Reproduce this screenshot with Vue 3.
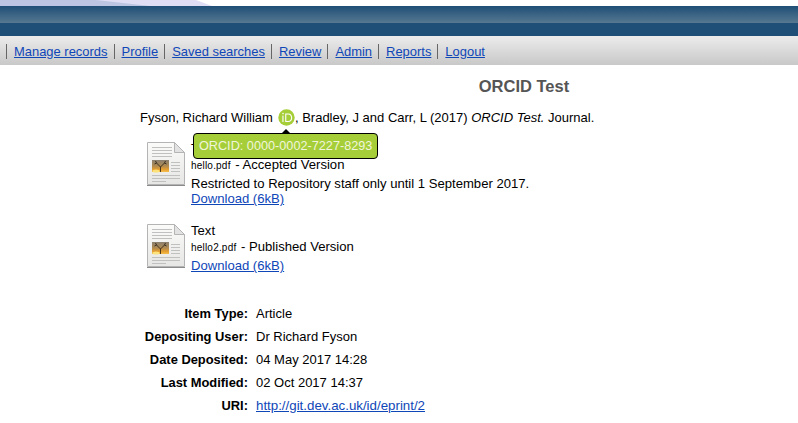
<template>
  <div class="page">
    <header class="top">
      <svg class="swoosh" width="798" height="6" viewBox="0 0 798 6">
        <rect x="0" y="0" width="798" height="6" fill="#fff" />
        <polygon points="0,0 196,0 212,6 0,6" fill="#e0def4" />
        <polygon points="0,0 96,0 150,6 0,6" fill="#bcc6e2" />
      </svg>
      <div class="band"></div>
      <nav class="menu">
        <a v-for="item in menu" :key="item" href="#">{{ item }}</a>
      </nav>
    </header>

    <main class="main">
      <h1 class="title">ORCID Test</h1>

      <p class="citation">
        <span>Fyson, Richard William</span>
        <span class="orcid-wrap">
          <svg class="orcid" width="17" height="17" viewBox="0 0 17 17">
            <circle cx="8.5" cy="8.5" r="8.2" fill="#a6ce39" />
            <rect x="4.4" y="6.6" width="1.1" height="6.4" fill="#fff" />
            <circle cx="5" cy="4.6" r="0.8" fill="#fff" />
            <path d="M7.2 4.4h3c2.7 0 4 2 4 4.3s-1.4 4.3-4 4.3h-3zM8.3 5.4v6.6h1.9c2 0 2.9-1.6 2.9-3.3s-.9-3.3-2.9-3.3z" fill="#fff" />
          </svg>
          <span class="tip">ORCID: 0000-0002-7227-8293</span>
        </span>
        <span>, Bradley, J and Carr, L (2017) <em>ORCID Test.</em> Journal.</span>
      </p>

      <div v-for="(doc, i) in docs" :key="doc.file" class="doc">
        <svg class="doc-icon" width="38" height="44" viewBox="0 0 38 44">
          <defs>
            <linearGradient :id="'sky' + i" x1="0" y1="0" x2="0" y2="1">
              <stop offset="0" stop-color="#8a8070" />
              <stop offset="0.5" stop-color="#b08a50" />
              <stop offset="0.8" stop-color="#e8a030" />
              <stop offset="1" stop-color="#f4c050" />
            </linearGradient>
            <linearGradient :id="'sheet' + i" x1="0" y1="0" x2="0" y2="1">
              <stop offset="0" stop-color="#fbfbfa" />
              <stop offset="1" stop-color="#e6e6e4" />
            </linearGradient>
          </defs>
          <path d="M.5.5h27l10 10v32h-37z" :fill="'url(#sheet' + i + ')'" stroke="#b4b4b4" />
          <path d="M27.5.5v10h10z" fill="#e2e2e2" stroke="#b4b4b4" />
          <path d="M0 43.5h38" stroke="#8a8a8a" />
          <path d="M5 5.5h20M5 8.5h20M5 11.5h20M5 14.5h20" stroke="#c0c0c0" />
          <path d="M24 20.5h9M24 23.5h9M24 26.5h9M24 29.5h9M5 33.5h28M5 36.5h28M5 39.5h14" stroke="#c0c0c0" />
          <rect x="5" y="18" width="17" height="12" :fill="'url(#sky' + i + ')'" />
          <ellipse cx="9" cy="29" rx="3.5" ry="1.5" fill="#fbe27a" />
          <path d="M13.5 30v-5l-4-4-2 1M9.5 21l-1-2M13.5 25l4-4 2 1M17.5 21l1-2" stroke="#241c12" stroke-width="0.8" fill="none" />
        </svg>
        <div class="doc-body">
          <div class="doc-type">Text</div>
          <div class="file-row"><span class="file">{{ doc.file }}</span> - {{ doc.version }}</div>
          <div v-if="doc.note" class="note">{{ doc.note }}</div>
          <a href="#" class="dl">Download (6kB)</a>
        </div>
      </div>

      <dl class="meta">
        <template v-for="row in meta" :key="row.label">
          <dt>{{ row.label }}:</dt>
          <dd>
            <a v-if="row.link" href="#" class="uri">{{ row.value }}</a>
            <template v-else>{{ row.value }}</template>
          </dd>
        </template>
      </dl>
    </main>
  </div>
</template>

<script setup>
const menu = ['Manage records', 'Profile', 'Saved searches', 'Review', 'Admin', 'Reports', 'Logout']

const docs = [
  {
    file: 'hello.pdf',
    version: 'Accepted Version',
    note: 'Restricted to Repository staff only until 1 September 2017.'
  },
  { file: 'hello2.pdf', version: 'Published Version' }
]

const meta = [
  { label: 'Item Type', value: 'Article' },
  { label: 'Depositing User', value: 'Dr Richard Fyson' },
  { label: 'Date Deposited', value: '04 May 2017 14:28' },
  { label: 'Last Modified', value: '02 Oct 2017 14:37' },
  { label: 'URI', value: 'http://git.dev.ac.uk/id/eprint/2', link: true }
]
</script>

<style>
html,
body {
  margin: 0;
  background: #fff;
}
</style>

<style scoped>
.page {
  width: 798px;
  height: 423px;
  overflow: hidden;
  font-family: 'Liberation Sans', Arial, sans-serif;
  font-size: 13px;
  color: #000;
}

a {
  color: #0f47b8;
  text-decoration: underline;
}

.swoosh {
  display: block;
}

.band {
  height: 30px;
  background: linear-gradient(to bottom, #1f4e77 0, #557790 16.5px, #1f4f76 17px, #1f4f76 30px);
}

.menu {
  height: 29px;
  box-sizing: border-box;
  padding: 8px 0 0 6px;
  display: flex;
  align-items: flex-start;
  background: linear-gradient(to bottom, #ececec, #c8c8c8);
  font-size: 12.95px;
  line-height: 15px;
}

.menu a {
  padding: 0 6px 0 7px;
  border-left: 1px solid #666;
}

.main {
  padding-left: 140px;
}

.title {
  margin: 12px 0 0;
  padding-left: 110px;
  width: 548px;
  text-align: center;
  font-size: 16.5px;
  line-height: 18px;
  font-weight: bold;
  color: #555;
}

.citation {
  margin: 14px 0 0;
  line-height: 17px;
  display: flex;
  align-items: center;
  white-space: pre;
}

.orcid-wrap {
  position: relative;
  display: inline-flex;
  margin: 0 0 0 5px;
}

.tip {
  position: absolute;
  left: -85px;
  top: 24px;
  padding: 0 5px;
  height: 24px;
  line-height: 24px;
  background: #a6ce39;
  border: 1px solid #000;
  border-radius: 4px;
  color: #f0f6dc;
  font-size: 12.7px;
  white-space: nowrap;
  z-index: 2;
}

.tip::before {
  content: '';
  position: absolute;
  top: -5px;
  left: 87px;
  border-left: 5px solid transparent;
  border-right: 5px solid transparent;
  border-bottom: 5px solid #000;
}

.doc {
  display: flex;
  margin-top: 14px;
  padding-left: 7px;
  font-size: 13.1px;
}

.doc + .doc {
  margin-top: 16px;
}

.doc-icon {
  flex: none;
  margin: 2px 6px 0 0;
}

.doc-body {
  display: flex;
  flex-direction: column;
  align-items: flex-start;
}

.doc-type {
  height: 16px;
  line-height: 18px;
}

.file-row,
.note {
  line-height: 18px;
}

.file {
  font-size: 10px;
  letter-spacing: 0.2px;
  margin-right: 1px;
}

.dl {
  line-height: 14px;
}

.note + .dl {
  margin-top: -1px;
}

.file-row + .dl {
  margin-top: 2px;
}

.meta {
  display: grid;
  grid-template-columns: 108px auto;
  column-gap: 8px;
  row-gap: 6px;
  margin: 32px 0 0;
  line-height: 17px;
}

.meta dt {
  font-weight: bold;
  font-size: 12.9px;
  text-align: right;
}

.meta dd {
  margin: 0;
}

.uri {
  font-size: 13.3px;
}
</style>
